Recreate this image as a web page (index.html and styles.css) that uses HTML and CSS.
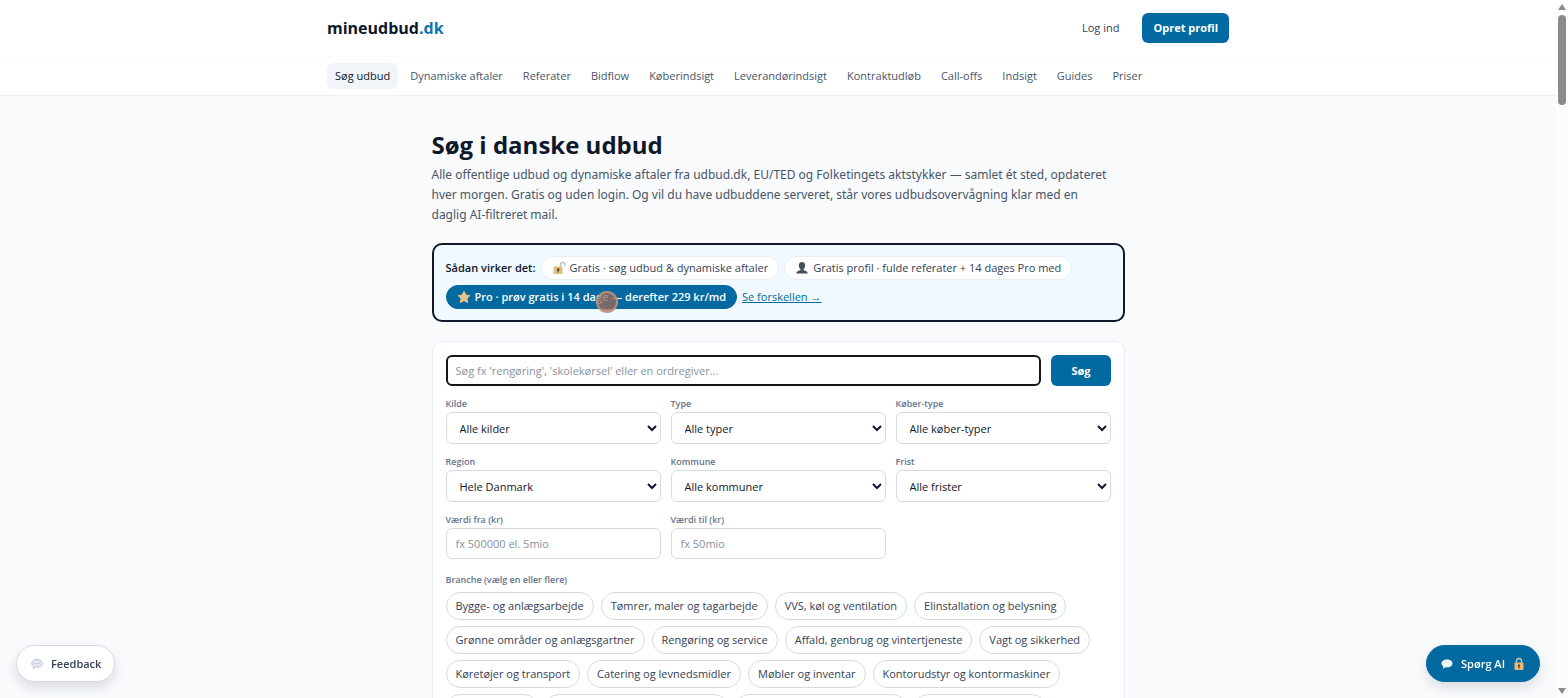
FILE: index.html
```html
<!DOCTYPE html>
<html lang="da">
<head>
  <meta charset="UTF-8" />
  <meta name="viewport" content="width=device-width, initial-scale=1" />
  <title>Søg i danske udbud – mineudbud.dk</title>
  <link rel="stylesheet" href="styles.css">
</head>
<body>

  <header class="site-header">
    <div class="topbar wrap">
      <a class="logo" href="#">mineudbud<span>.dk</span></a>
      <div class="account">
        <a class="login" href="#">Log ind</a>
        <a class="btn" href="#">Opret profil</a>
      </div>
    </div>
    <div class="nav-row">
      <nav class="main-nav wrap">
        <a class="active" href="#">Søg udbud</a>
        <a href="#">Dynamiske aftaler</a>
        <a href="#">Referater</a>
        <a href="#">Bidflow</a>
        <a href="#">Køberindsigt</a>
        <a href="#">Leverandørindsigt</a>
        <a href="#">Kontraktudløb</a>
        <a href="#">Call-offs</a>
        <a href="#">Indsigt</a>
        <a href="#">Guides</a>
        <a href="#">Priser</a>
      </nav>
    </div>
  </header>

  <main class="content">
    <h1>Søg i danske udbud</h1>
    <p class="intro">Alle offentlige udbud og dynamiske aftaler fra udbud.dk, EU/TED og Folketingets aktstykker — samlet ét sted, opdateret<br>
      hver morgen. Gratis og uden login. Og vil du have udbuddene serveret, står vores udbudsovervågning klar med en<br>
      daglig AI-filtreret mail.</p>

    <section class="how">
      <strong>Sådan virker det:</strong>
      <span class="pill">
        <svg class="icon" viewBox="0 0 14 14" aria-hidden="true">
          <path d="M8.500 6V3.500a2.200 2.200 0 0 1 4.400 0V5" fill="none" stroke="#b6bcc4" stroke-width="1.300"/>
          <rect x="1.500" y="5.500" width="9" height="7.500" rx=".6" fill="#e3bd7c"/>
          <path d="M5 7.500h2.400v1.700l-.8.500V11.500H5.600V9.700L5 9.200z" fill="#4a4038"/>
        </svg>
        Gratis · søg udbud &amp; dynamiske aftaler
      </span>
      <span class="pill">
        <svg class="icon" viewBox="0 0 14 14" aria-hidden="true">
          <path d="M7 1c2 0 3.200 1.400 3.200 3.500 0 1.600-.7 2.800-1.600 3.500v1.200c2 .3 3.700 1 4.200 3.300H1.200c.5-2.300 2.200-3 4.200-3.300V8C4.500 7.300 3.800 6.100 3.800 4.500 3.800 2.400 5 1 7 1z" fill="#44505e"/>
        </svg>
        Gratis profil · fulde referater + 14 dages Pro med
      </span>
      <span class="pill pro">
        <svg class="icon" viewBox="0 0 14 14" aria-hidden="true">
          <path d="M7 1.300l1.800 3.800 4.100.5-3 2.900.8 4.100L7 10.600l-3.700 2 .8-4.100-3-2.900 4.100-.5z" fill="#e9c48a" stroke="#e9c48a" stroke-width="1" stroke-linejoin="round"/>
        </svg>
        Pro · prøv gratis i 14 dage — derefter 229 kr/md
        <i class="pointer"></i>
      </span>
      <a class="compare" href="#">Se forskellen →</a>
    </section>

    <form class="search-card">
      <div class="search-row">
        <input type="text" class="search-input" aria-label="Søg" placeholder="Søg fx 'rengøring', 'skolekørsel' eller en ordregiver...">
        <button type="submit" class="btn">Søg</button>
      </div>

      <div class="filters">
        <div class="field">
          <label for="kilde">Kilde</label>
          <select id="kilde"><option>Alle kilder</option></select>
        </div>
        <div class="field">
          <label for="type">Type</label>
          <select id="type"><option>Alle typer</option></select>
        </div>
        <div class="field">
          <label for="kobertype">Køber-type</label>
          <select id="kobertype"><option>Alle køber-typer</option></select>
        </div>
        <div class="field">
          <label for="region">Region</label>
          <select id="region"><option>Hele Danmark</option></select>
        </div>
        <div class="field">
          <label for="kommune">Kommune</label>
          <select id="kommune"><option>Alle kommuner</option></select>
        </div>
        <div class="field">
          <label for="frist">Frist</label>
          <select id="frist"><option>Alle frister</option></select>
        </div>
        <div class="field">
          <label for="fra">Værdi fra (kr)</label>
          <input type="text" id="fra" placeholder="fx 500000 el. 5mio">
        </div>
        <div class="field">
          <label for="til">Værdi til (kr)</label>
          <input type="text" id="til" placeholder="fx 50mio">
        </div>
      </div>

      <fieldset class="branches">
        <legend>Branche (vælg en eller flere)</legend>
        <div class="chips">
          <button type="button">Bygge- og anlægsarbejde</button>
          <button type="button">Tømrer, maler og tagarbejde</button>
          <button type="button">VVS, køl og ventilation</button>
          <button type="button">Elinstallation og belysning</button>
          <button type="button">Grønne områder og anlægsgartner</button>
          <button type="button">Rengøring og service</button>
          <button type="button">Affald, genbrug og vintertjeneste</button>
          <button type="button">Vagt og sikkerhed</button>
          <button type="button">Køretøjer og transport</button>
          <button type="button">Catering og levnedsmidler</button>
          <button type="button">Møbler og inventar</button>
          <button type="button">Kontorudstyr og kontormaskiner</button>
          <button type="button">IT og software</button>
          <button type="button">Rådgivning og konsulentbistand</button>
          <button type="button">Sundhed og medicinsk udstyr</button>
          <button type="button">Uddannelse og kurser</button>
        </div>
      </fieldset>
    </form>
  </main>

  <button type="button" class="float feedback">
    <svg class="icon" viewBox="0 0 14 14" aria-hidden="true">
      <path d="M7 2.500c3.200 0 5.300 1.500 5.300 3.900S10.200 10.200 7 10.200c-.5 0-1 0-1.500-.1L3.200 11.700l.3-2.300C2.300 8.700 1.700 7.700 1.700 6.400 1.700 4 3.800 2.500 7 2.500z" fill="#e4e8f1" stroke="#b4bdcd" stroke-width=".8"/>
      <path d="M4.300 6.500h.8M6.600 6.500h.8M8.900 6.500h.8" stroke="#a3adbf" stroke-width="1"/>
    </svg>
    Feedback
  </button>

  <button type="button" class="float ask-ai">
    <svg class="icon" viewBox="0 0 14 14" aria-hidden="true">
      <path d="M7 2.500c3.200 0 5.500 1.600 5.500 4s-2.300 3.900-5.500 3.900c-.4 0-.9 0-1.300-.1L2.800 11.700l.6-2.300C2.100 8.700 1.500 7.700 1.500 6.500c0-2.400 2.300-4 5.500-4z" fill="#eef3f8"/>
    </svg>
    Spørg AI
    <svg class="icon lock" viewBox="0 0 14 14" aria-hidden="true">
      <path d="M4.500 6V4a2.500 2.500 0 0 1 5 0v2" fill="none" stroke="#c9c3ba" stroke-width="1.300"/>
      <rect x="2.500" y="5.500" width="9" height="7.500" rx=".8" fill="#e6b778"/>
      <path d="M6 7.500h2v1.700l-.4.400v1.900H6.400V9.600L6 9.200z" fill="#5b4633"/>
    </svg>
  </button>

  <div class="scrollbar" aria-hidden="true">
    <span class="arrow-up"></span>
    <span class="thumb"></span>
    <span class="arrow-down"></span>
  </div>

</body>
</html>
```

FILE: styles.css
```css
:root {
  --brand: #0369a1;
  --ink: #0f172a;
  --text: #334155;
  --muted: #475569;
  --label: #64748b;
  --line: #edf1f5;
  --line-dark: #d5dbe4;
  --page: #f8fafc;
}

* {
  box-sizing: border-box;
}

html {
  scrollbar-width: none;
}

body {
  margin: 0;
  padding-right: 12px;
  background: var(--page);
  font-family: "Segoe UI", "Open Sans", "Noto Sans", sans-serif;
  font-size: 11px;
  line-height: 16px;
  color: var(--ink);
}

a {
  color: inherit;
  text-decoration: none;
}

button,
input,
select {
  font: inherit;
}

button {
  cursor: pointer;
}

.wrap {
  max-width: 902px;
  margin: 0 auto;
}

/* Header */
.site-header {
  background: #fff;
  border-bottom: 1px solid var(--line);
}

.topbar {
  display: flex;
  justify-content: space-between;
  align-items: center;
  height: 56px;
}

.logo {
  font-size: 16px;
  font-weight: 700;
}

.logo span {
  color: #0c76b3;
}

.account {
  display: flex;
  align-items: center;
  gap: 23px;
}

.login {
  font-weight: 500;
  color: var(--text);
}

.btn {
  padding: 7px 11px;
  border: none;
  border-radius: 6px;
  background: var(--brand);
  color: #fff;
  font-weight: 700;
}

.nav-row {
  border-top: 1px solid #fafbfc;
}

.main-nav {
  display: flex;
  gap: 4px;
  padding: 6px 0;
}

.main-nav a {
  padding: 5px 8px;
  border-radius: 6px;
  font-weight: 500;
  color: var(--muted);
}

.main-nav a.active {
  background: #f1f5f9;
  color: var(--ink);
}

/* Content */
.content {
  max-width: 693px;
  margin: 0 auto;
  padding: 32px 0;
}

h1 {
  margin: 0 0 3px;
  font-size: 24px;
  line-height: 34px;
  font-weight: 700;
}

.intro {
  margin: 0 0 18px;
  font-family: "Segoe UI", "Noto Sans", sans-serif;
  font-size: 12px;
  line-height: 20px;
  color: var(--muted);
}

.how {
  display: flex;
  flex-wrap: wrap;
  align-items: center;
  gap: 5px;
  margin-bottom: 19px;
  padding: 11px 12px;
  border: 2px solid var(--ink);
  border-radius: 10px;
  background: #f0f9ff;
}

.how strong {
  font-weight: 600;
}

.pill {
  position: relative;
  display: flex;
  align-items: center;
  gap: 4px;
  padding: 3px 10px;
  border: 1px solid #e8f0f6;
  border-radius: 12px;
  background: #fff;
  font-weight: 500;
  color: var(--text);
}

.pill.pro {
  border-color: var(--brand);
  background: var(--brand);
  color: #fff;
  font-weight: 600;
}

.icon {
  width: 14px;
  height: 14px;
  flex: none;
}

.pointer {
  position: absolute;
  top: 5px;
  left: 149px;
  width: 22px;
  height: 22px;
  border: 2px solid rgba(205, 160, 125, 0.7);
  border-radius: 50%;
  background: rgba(150, 105, 95, 0.8);
}

.compare {
  color: var(--brand);
  font-weight: 500;
  text-decoration: underline;
}

/* Search card */
.search-card {
  padding: 13px;
  border: 1px solid #e9eef4;
  border-radius: 10px;
  background: #fff;
}

.search-row {
  display: flex;
  gap: 10px;
  margin-bottom: 10px;
}

.search-row .btn {
  padding: 7px 20px;
}

input {
  width: 100%;
  height: 31px;
  padding: 0 9px;
  border: 1px solid var(--line-dark);
  border-radius: 6px;
  background: #fff;
  color: var(--ink);
}

input::placeholder {
  color: #8b919c;
}

.search-input {
  flex: 1;
  padding: 0 8px;
  border: 2px solid #14171c;
}

.filters {
  display: grid;
  grid-template-columns: repeat(3, 1fr);
  gap: 10px;
}

.field {
  display: flex;
  flex-direction: column;
}

.field label,
.branches legend {
  padding: 0;
  font-size: 9px;
  font-weight: 600;
  color: var(--label);
}

select {
  width: 100%;
  height: 32px;
  padding: 0 0 0 9px;
  border: 1px solid var(--line-dark);
  border-radius: 6px;
  background: #fff;
  color: var(--ink);
}

.branches {
  min-width: 0;
  margin: 13px 0 0;
  padding: 0;
  border: none;
}

.chips {
  display: flex;
  flex-wrap: wrap;
  gap: 6px 7px;
  padding-top: 4px;
}

.chips button {
  padding: 5px 9px;
  border: 1px solid var(--line-dark);
  border-radius: 14px;
  background: #fff;
  color: var(--text);
}

/* Floating buttons */
.float {
  position: fixed;
  bottom: 16px;
  display: flex;
  align-items: center;
  gap: 7px;
  height: 37px;
  padding: 0 13px;
  border: 1px solid var(--line-dark);
  border-radius: 19px;
  background: #fff;
  color: var(--text);
  font-weight: 600;
  box-shadow: 0 6px 12px rgba(15, 23, 42, 0.12);
}

.feedback {
  left: 16px;
}

.ask-ai {
  right: 28px;
  border-color: var(--brand);
  background: var(--brand);
  color: #fff;
}

/* Page scrollbar */
.scrollbar {
  position: fixed;
  top: 0;
  right: 0;
  bottom: 0;
  width: 12px;
  display: flex;
  flex-direction: column;
  align-items: center;
  padding: 4px 0;
  background: #fcfcfc;
}

.arrow-up,
.arrow-down {
  border: 4px solid transparent;
}

.arrow-up {
  border-top: none;
  border-bottom: 6px solid #8b8b8b;
}

.arrow-down {
  margin-top: auto;
  border-bottom: none;
  border-top: 6px solid #8b8b8b;
}

.thumb {
  width: 8px;
  height: 13%;
  margin-top: 5px;
  border-radius: 4px;
  background: #8b8b8b;
}
```
